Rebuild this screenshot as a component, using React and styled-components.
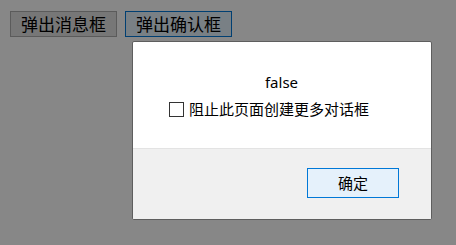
import React from "react";
import styled, { createGlobalStyle } from "styled-components";

const Global = createGlobalStyle`
  html, body { margin: 0; padding: 0; background: #ffffff; }
  body {
    width: 456px; height: 245px; overflow: hidden;
    font-family: "Noto Sans", "Noto Sans CJK SC", sans-serif;
  }
`;

const Page = styled.div`
  display: flex;
  gap: 8px;
  padding: 11px 0 0 10px;
`;

const PageButton = styled.button`
  box-sizing: border-box;
  width: 107px;
  height: 26px;
  padding: 0;
  margin: 0;
  font-family: "Noto Sans CJK SC", sans-serif;
  font-size: 17px;
  line-height: 24px;
  color: #000;
  background: ${(p) => (p.$focused ? "#e5f1fb" : "#e1e1e1")};
  border: 1px solid ${(p) => (p.$focused ? "#0078d7" : "#adadad")};
  border-radius: 0;
`;

const Overlay = styled.div`
  position: fixed;
  inset: 0;
  background: rgba(0, 0, 0, 0.47);
`;

const Dialog = styled.div`
  position: fixed;
  left: 132px;
  top: 41px;
  width: 300px;
  box-sizing: border-box;
  border: 1px solid #5e5e5e;
  border-radius: 2px;
  background: #ffffff;
  display: flex;
  flex-direction: column;
  overflow: hidden;
`;

const Body = styled.div`
  height: 107px;
  box-sizing: border-box;
  padding-top: 30px;
  display: flex;
  flex-direction: column;
  border-bottom: 1px solid #e3e3e3;
`;

const Message = styled.div`
  text-align: center;
  font-family: "Noto Sans", sans-serif;
  font-size: 15px;
  line-height: 20px;
  color: #000;
  padding-right: 1px;
`;

const CheckRow = styled.label`
  display: flex;
  align-items: center;
  gap: 5px;
  margin-top: 7px;
  padding-left: 36px;
  font-family: "Noto Sans CJK SC", sans-serif;
  font-size: 15px;
  line-height: 20px;
  color: #000;
`;

const Box = styled.span`
  box-sizing: border-box;
  width: 15px;
  height: 15px;
  border: 1px solid #333333;
  background: #ffffff;
  flex: none;
`;

const Footer = styled.div`
  height: 70px;
  box-sizing: border-box;
  background: #f0f0f0;
  display: flex;
  justify-content: flex-end;
  align-items: flex-start;
  padding: 19px 32px 0 0;
`;

const OkButton = styled.button`
  box-sizing: border-box;
  width: 92px;
  height: 30px;
  margin: 0;
  padding: 0;
  background: #e5f1fb;
  border: 1px solid #0078d7;
  border-radius: 0;
  font-family: "Noto Sans CJK SC", sans-serif;
  font-size: 15px;
  line-height: 20px;
  color: #000;
`;

export default function App() {
  return (
    <>
      <Global />
      <Page>
        <PageButton>弹出消息框</PageButton>
        <PageButton $focused>弹出确认框</PageButton>
      </Page>
      <Overlay />
      <Dialog>
        <Body>
          <Message>false</Message>
          <CheckRow>
            <Box />
            <span>阻止此页面创建更多对话框</span>
          </CheckRow>
        </Body>
        <Footer>
          <OkButton>确定</OkButton>
        </Footer>
      </Dialog>
    </>
  );
}
